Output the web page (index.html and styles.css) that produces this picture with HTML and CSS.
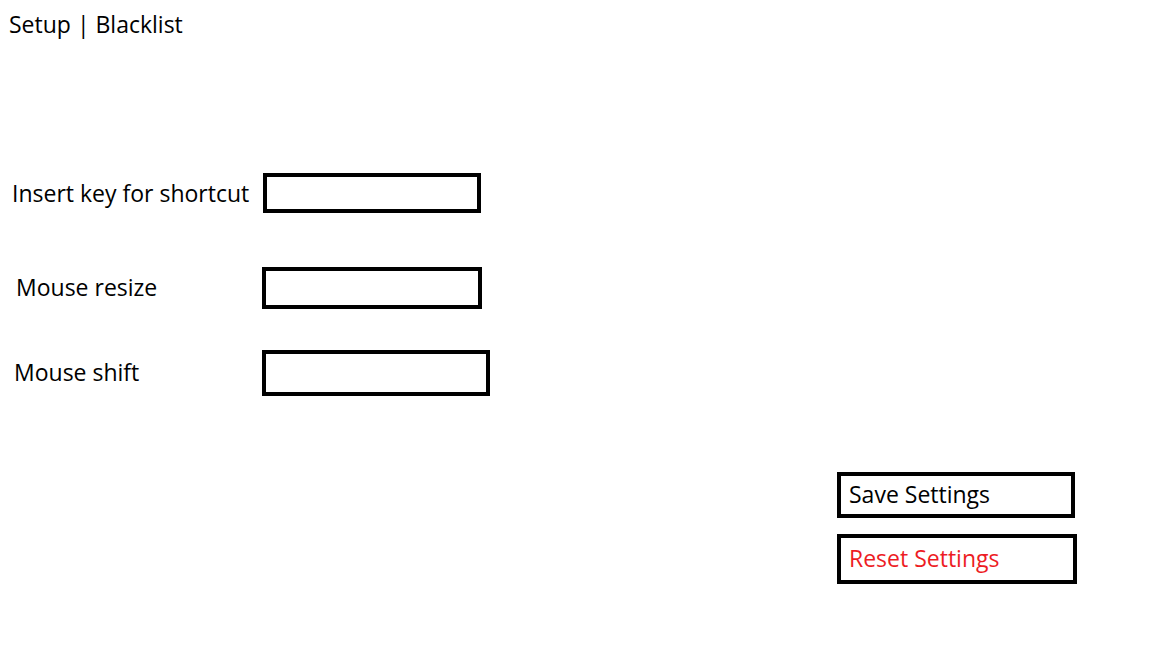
FILE: index.html
```html
<!DOCTYPE html>
<html lang="en">
<head>
    <meta charset="UTF-8">
    <title>Setup</title>
    <link rel="stylesheet" href="styles.css">
</head>
<body>

<div class="nav">Setup | Blacklist</div>

<div class="settings">
    <div class="row row-shortcut">
        <label class="label" for="shortcut">Insert key for shortcut</label>
        <input class="field" type="text" id="shortcut">
    </div>
    <div class="row row-resize">
        <label class="label" for="resize">Mouse resize</label>
        <input class="field" type="text" id="resize">
    </div>
    <div class="row row-shift">
        <label class="label" for="shift">Mouse shift</label>
        <input class="field" type="text" id="shift">
    </div>
</div>

<div class="actions">
    <button class="btn btn-save">Save Settings</button>
    <button class="btn btn-reset">Reset Settings</button>
</div>

</body>
</html>
```

FILE: styles.css
```css
body {
    font-family: "Open Sans", "Noto Sans", sans-serif;
    background-color: #ffffff;
    color: #000000;
    margin: 0;
    padding: 0;
}
.nav {
    font-size: 23px;
    line-height: 28px;
    padding: 10px 0 0 9px;
}
.settings {
    margin-top: 135px;
}
.row {
    display: flex;
    align-items: center;
}
.label {
    font-size: 23px;
    line-height: 28px;
    padding-bottom: 3px;
}
.field {
    box-sizing: border-box;
    border: 4px solid #000;
    background: #fff;
    padding: 0;
    margin: 0;
    outline: none;
}
.row-shortcut .label {
    padding-left: 12px;
    width: 251px;
    padding-bottom: 0;
}
.row-shortcut .field {
    width: 218px;
    height: 40px;
}
.row-resize {
    margin-top: 54px;
}
.row-resize .label {
    padding-left: 16px;
    width: 246px;
}
.row-resize .field {
    width: 220px;
    height: 42px;
}
.row-shift {
    margin-top: 41px;
}
.row-shift .label {
    padding-left: 14px;
    width: 248px;
}
.row-shift .field {
    width: 228px;
    height: 46px;
}
.actions {
    display: flex;
    flex-direction: column;
    align-items: flex-start;
    margin: 76px 0 0 837px;
    gap: 16px;
}
.btn {
    box-sizing: border-box;
    font-family: "Open Sans", "Noto Sans", sans-serif;
    font-size: 23px;
    text-align: left;
    background: #fff;
    border: 4px solid #000;
    padding: 0 0 2px 8px;
    margin: 0;
}
.btn-save {
    width: 238px;
    height: 46px;
    color: #000;
}
.btn-reset {
    width: 240px;
    height: 50px;
    color: #ed1c24;
}
```
